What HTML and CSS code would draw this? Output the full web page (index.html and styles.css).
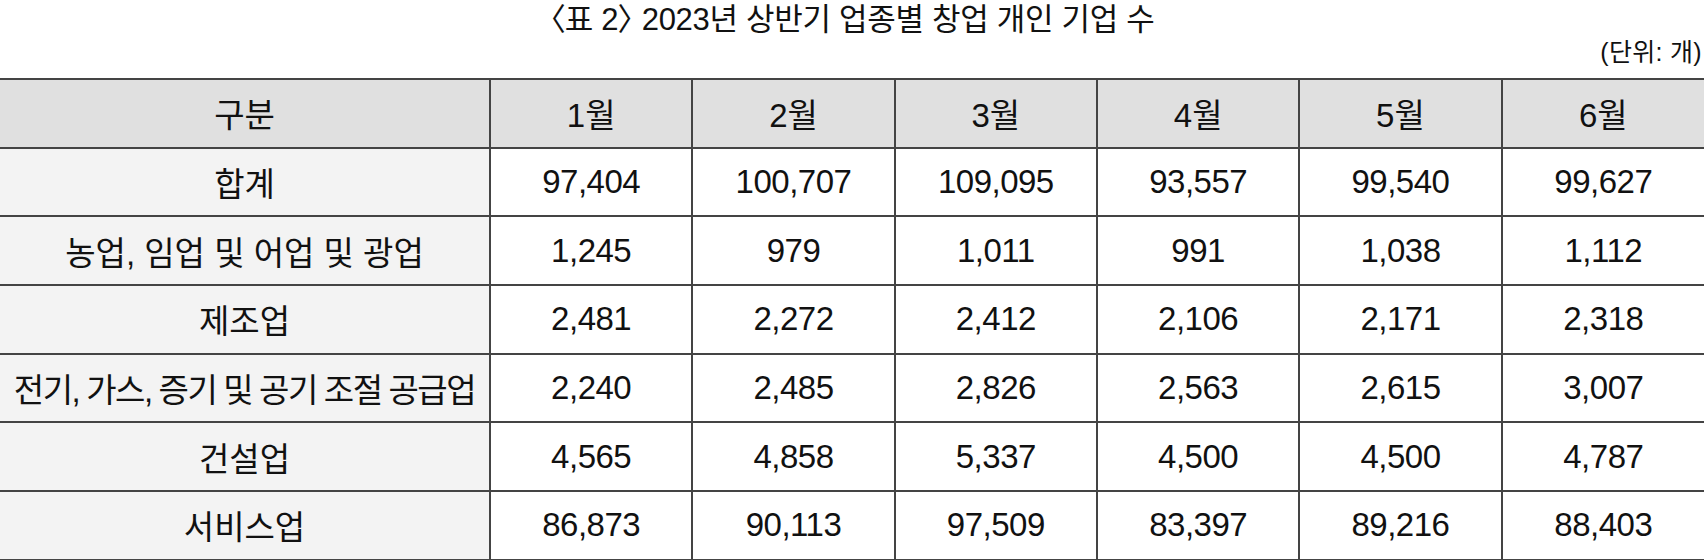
FILE: index.html
```html
<!DOCTYPE html>
<html lang="ko">
<head>
<meta charset="utf-8">
<link rel="stylesheet" href="styles.css">
</head>
<body>
<div class="page">
  <h1 class="title">〈표 2〉 2023년 상반기 업종별 창업 개인 기업 수</h1>
  <div class="unit">(단위: 개)</div>
  <table class="data">
    <colgroup>
      <col class="c-label">
      <col><col><col><col><col><col>
    </colgroup>
    <thead>
      <tr><th>구분</th><th>1월</th><th>2월</th><th>3월</th><th>4월</th><th>5월</th><th>6월</th></tr>
    </thead>
    <tbody>
      <tr><th>합계</th><td>97,404</td><td>100,707</td><td>109,095</td><td>93,557</td><td>99,540</td><td>99,627</td></tr>
      <tr><th>농업, 임업 및 어업 및 광업</th><td>1,245</td><td>979</td><td>1,011</td><td>991</td><td>1,038</td><td>1,112</td></tr>
      <tr><th>제조업</th><td>2,481</td><td>2,272</td><td>2,412</td><td>2,106</td><td>2,171</td><td>2,318</td></tr>
      <tr><th class="tight">전기, 가스, 증기 및 공기 조절 공급업</th><td>2,240</td><td>2,485</td><td>2,826</td><td>2,563</td><td>2,615</td><td>3,007</td></tr>
      <tr><th>건설업</th><td>4,565</td><td>4,858</td><td>5,337</td><td>4,500</td><td>4,500</td><td>4,787</td></tr>
      <tr><th>서비스업</th><td>86,873</td><td>90,113</td><td>97,509</td><td>83,397</td><td>89,216</td><td>88,403</td></tr>
    </tbody>
  </table>
</div>
</body>
</html>
```
FILE: styles.css
```css
html, body {
  margin: 0;
  padding: 0;
  background: #ffffff;
}
body {
  font-family: "Liberation Sans", "Noto Sans CJK KR", sans-serif;
  color: #111111;
}
.page {
  width: 1704px;
}
.title {
  margin: 0;
  height: 40px;
  line-height: 40px;
  font-size: 31px;
  font-weight: 400;
  text-align: center;
  letter-spacing: -0.3px;
  font-feature-settings: "palt";
}
.unit {
  height: 20px;
  line-height: 20px;
  font-size: 25px;
  text-align: right;
  padding-right: 2px;
  margin-top: 2px;
  margin-bottom: 16px;
  letter-spacing: 0.3px;
}
.data {
  width: 1704px;
  border-collapse: collapse;
  table-layout: fixed;
  font-size: 33px;
}
.c-label {
  width: 490px;
}
.data th, .data td {
  height: 66.7px;
  padding: 0;
  text-align: center;
  vertical-align: middle;
  font-weight: 400;
  border: 2px solid #444444;
  white-space: nowrap;
}
.data tr > :first-child {
  border-left: none;
}
.data tr > :last-child {
  border-right: none;
}
.data thead th {
  background: #e0e0e0;
}
.data tbody th {
  background: #f3f3f3;
}
.data th.tight {
  letter-spacing: -1.4px;
  word-spacing: -1px;
}
.data td {
  background: #ffffff;
  letter-spacing: -0.5px;
}
```
